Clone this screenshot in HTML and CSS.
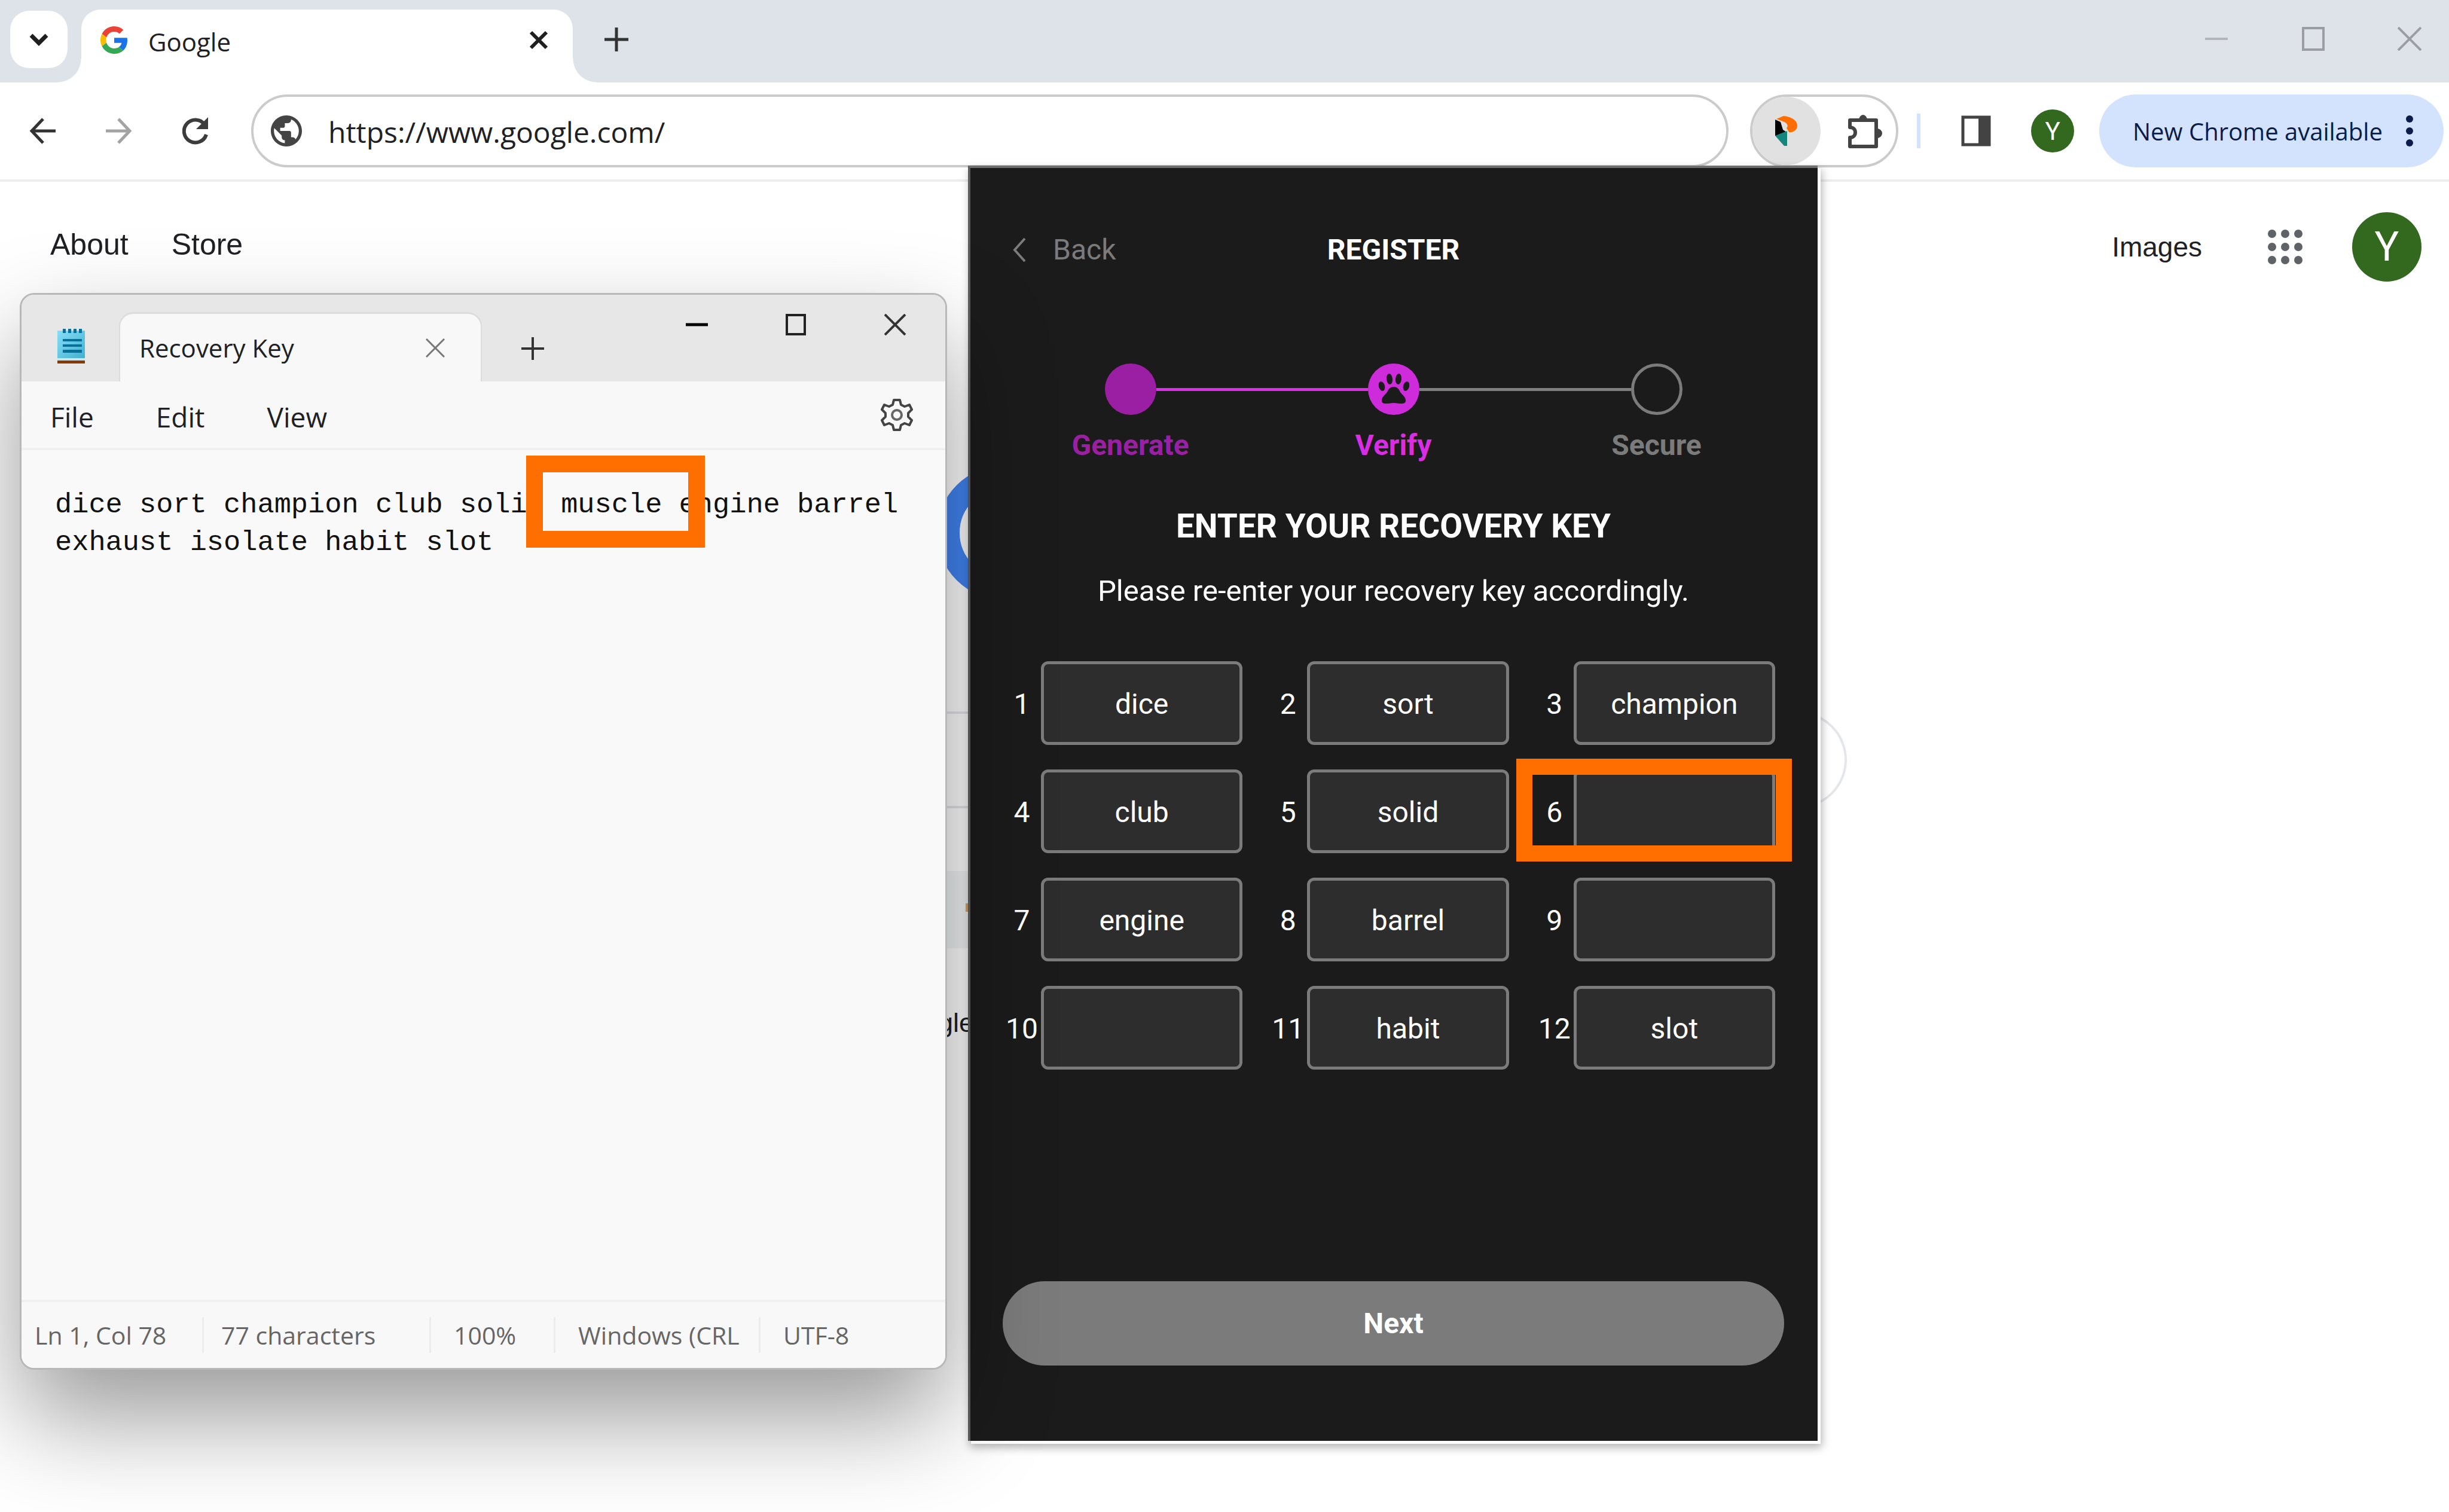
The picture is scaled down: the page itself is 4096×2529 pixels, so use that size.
FILE: index.html
```html
<!DOCTYPE html>
<html lang="en">
<head>
<meta charset="utf-8">
<title>Google</title>
<link rel="stylesheet" href="styles.css">
</head>
<body>
<header class="tabstrip">
  <button class="tab-search" aria-label="Search tabs"><svg width="38" height="24" viewBox="0 0 38 24"><path d="M6 5l13 13L32 5" fill="none" stroke="#1f1f1f" stroke-width="7"/></svg></button>
  <div class="tab">
    <svg width="46" height="48" viewBox="0 0 48 48"><path fill="#ea4335" d="M24 9.500c3.540 0 6.710 1.220 9.210 3.600l6.850-6.850C35.900 2.380 30.470 0 24 0 14.620 0 6.510 5.380 2.560 13.220l7.980 6.190C12.430 13.720 17.740 9.500 24 9.500z"/><path fill="#1a73e8" d="M46.980 24.550c0-1.570-.15-3.090-.38-4.550H24v9.020h12.940c-.58 2.960-2.260 5.480-4.780 7.180l7.730 6c4.510-4.180 7.090-10.360 7.090-17.650z"/><path fill="#fbbc05" d="M10.530 28.590c-.48-1.450-.76-2.990-.76-4.590s.27-3.140.76-4.590l-7.980-6.190C.920 16.460 0 20.120 0 24c0 3.880.92 7.540 2.560 10.780l7.970-6.190z"/><path fill="#34a853" d="M24 48c6.480 0 11.930-2.130 15.890-5.810l-7.730-6c-2.150 1.450-4.920 2.300-8.160 2.300-6.260 0-11.570-4.220-13.470-9.910l-7.980 6.190C6.510 42.620 14.620 48 24 48z"/></svg>
    <span class="tab-title">Google</span>
    <button class="plain" aria-label="Close tab"><svg width="32" height="32" viewBox="0 0 32 32"><path d="M3 3l26 26M29 3L3 29" stroke="#1f1f1f" stroke-width="6"/></svg></button>
  </div>
  <button class="plain new-tab" aria-label="New tab"><svg width="40" height="40" viewBox="0 0 40 40"><path d="M20 0v40M0 20h40" stroke="#333" stroke-width="5"/></svg></button>
  <div class="win-buttons">
    <button class="plain" aria-label="Minimize"><svg width="40" height="40" viewBox="0 0 40 40"><path d="M0 20h38" stroke="#b2b6ba" stroke-width="4"/></svg></button>
    <button class="plain" aria-label="Maximize"><svg width="40" height="40" viewBox="0 0 40 40"><rect x="3" y="2" width="34" height="36" fill="none" stroke="#9a9ea2" stroke-width="4"/></svg></button>
    <button class="plain" aria-label="Close"><svg width="40" height="40" viewBox="0 0 40 40"><path d="M1 1l38 38M39 1L1 39" stroke="#9a9ea2" stroke-width="4"/></svg></button>
  </div>
</header>

<div class="toolbar">
  <div class="nav-buttons">
    <button class="plain" aria-label="Back"><svg width="44" height="44" viewBox="0 0 44 44"><path d="M23 2L4 22l19 20M4 22h40" fill="none" stroke="#333" stroke-width="5"/></svg></button>
    <button class="plain" aria-label="Forward"><svg width="44" height="44" viewBox="0 0 44 44"><path d="M21 2l19 20-19 20M40 22H0" fill="none" stroke="#a3a3a3" stroke-width="5"/></svg></button>
    <button class="plain" aria-label="Reload"><svg width="44" height="48" viewBox="0 0 44 48"><path d="M37 13A19 19 0 1 0 40 30" fill="none" stroke="#3c3c3c" stroke-width="6"/><path d="M43 1v20H23z" fill="#3c3c3c"/></svg></button>
  </div>
  <label class="omnibox">
    <svg width="52" height="52" viewBox="2 2 20 20"><path fill="#444" d="M12 2C6.480 2 2 6.480 2 12s4.480 10 10 10 10-4.480 10-10S17.520 2 12 2zm-1 17.930c-3.950-.49-7-3.850-7-7.930 0-.62.08-1.210.21-1.790L9 15v1c0 1.100.9 2 2 2v1.930zm6.900-2.540c-.26-.81-1-1.390-1.900-1.390h-1v-3c0-.55-.45-1-1-1H8v-2h2c.55 0 1-.45 1-1V7h2c1.100 0 2-.9 2-2v-.41c2.930 1.190 5 4.060 5 7.410 0 2.080-.8 3.970-2.100 5.390z"/></svg>
    <input class="url" type="text" value="https://www.google.com/" aria-label="Address">
  </label>
  <div class="extensions">
    <button class="ext-active" aria-label="Wallet extension"><svg width="38" height="50" viewBox="0 0 38 50"><path d="M2 5L14 0c12 1 23 7 23 16 0 7-6 12-14 11l-4-7c4-3 1-9-6-11z" fill="#ff6f00"/><path d="M0 6l9 4 4 13 6 4-6 6H0z" fill="#000"/><path d="M0 33l20-8v25h-5z" fill="#16857c"/></svg></button>
    <button class="plain" aria-label="Extensions"><svg width="60" height="60" viewBox="0 0 60 60"><path d="M3 12h44v44H3V41c12 0 12-17 0-17z" fill="none" stroke="#434343" stroke-width="6" stroke-linejoin="round"/><path d="M18 12a7 9 0 0 1 14 0zM48 26a9 8 0 0 1 0 16z" fill="#434343"/></svg></button>
  </div>
  <span class="divider"></span>
  <button class="plain side-panel" aria-label="Side panel"><svg width="50" height="52" viewBox="0 0 50 52"><rect x="3" y="3" width="44" height="46" fill="none" stroke="#434343" stroke-width="5"/><path d="M29 3h18v46H29z" fill="#434343"/></svg></button>
  <button class="avatar avatar-small" aria-label="Profile">Y</button>
  <button class="update">New Chrome available <svg width="12" height="52" viewBox="0 0 12 52"><g fill="#0a1d4a"><circle cx="6" cy="6" r="6"/><circle cx="6" cy="26" r="6"/><circle cx="6" cy="46" r="6"/></g></svg></button>
</div>

<main class="page">
  <nav class="page-nav">
    <div class="site-links">
      <a href="#about">About</a>
      <a href="#store">Store</a>
    </div>
    <a class="images" href="#images">Images</a>
    <button class="plain apps" aria-label="Google apps"><svg width="58" height="58" viewBox="0 0 58 58"><g fill="#5f6368"><circle cx="7" cy="7" r="7"/><circle cx="29" cy="7" r="7"/><circle cx="51" cy="7" r="7"/><circle cx="7" cy="29" r="7"/><circle cx="29" cy="29" r="7"/><circle cx="51" cy="29" r="7"/><circle cx="7" cy="51" r="7"/><circle cx="29" cy="51" r="7"/><circle cx="51" cy="51" r="7"/></g></svg></button>
    <button class="avatar avatar-large" aria-label="Account">Y</button>
  </nav>
  <svg class="logo" viewBox="0 0 962 224"><circle cx="112" cy="112" r="93" fill="none" stroke="#4285f4" stroke-width="38"/></svg>
  <div class="search-box"></div>
  <div class="search-buttons"><span class="button-mark"></span></div>
  <p class="offer">gle</p>
</main>

<section class="popup" aria-label="Register">
  <div class="popup-head">
    <button class="back"><svg width="24" height="42" viewBox="0 0 24 42"><path d="M21 2L4 21l17 19" fill="none" stroke="#7b7b7b" stroke-width="4"/></svg>Back</button>
    <h1>REGISTER</h1>
  </div>
  <ol class="steps">
    <li class="done"><div class="rail"><span class="line none"></span><span class="dot"></span><span class="line on"></span></div>Generate</li>
    <li class="current"><div class="rail"><span class="line on"></span><span class="dot"><svg width="86" height="86" viewBox="0 0 86 86"><g fill="#1b1b1b"><ellipse cx="36" cy="26" rx="5" ry="9" transform="rotate(-6 36 26)"/><ellipse cx="51" cy="26" rx="5" ry="9" transform="rotate(6 51 26)"/><ellipse cx="23" cy="38" rx="5" ry="8" transform="rotate(-16 23 38)"/><ellipse cx="64" cy="38" rx="5" ry="8" transform="rotate(16 64 38)"/><path d="M43 39c6 0 9 4 11 9 4 5 9 8 9 14 0 7-8 5-20 4-12 1-20 3-20-4 0-6 5-9 9-14 2-5 5-9 11-9z"/></g></svg></span><span class="line"></span></div>Verify</li>
    <li><div class="rail"><span class="line"></span><span class="dot"></span><span class="line none"></span></div>Secure</li>
  </ol>
  <h2>ENTER YOUR RECOVERY KEY</h2>
  <p class="hint">Please re-enter your recovery key accordingly.</p>
  <div class="words">
    <div class="word"><label for="w1">1</label><input id="w1" value="dice"></div>
    <div class="word"><label for="w2">2</label><input id="w2" value="sort"></div>
    <div class="word"><label for="w3">3</label><input id="w3" value="champion"></div>
    <div class="word"><label for="w4">4</label><input id="w4" value="club"></div>
    <div class="word"><label for="w5">5</label><input id="w5" value="solid"></div>
    <div class="word marked"><label for="w6">6</label><input id="w6"></div>
    <div class="word"><label for="w7">7</label><input id="w7" value="engine"></div>
    <div class="word"><label for="w8">8</label><input id="w8" value="barrel"></div>
    <div class="word"><label for="w9">9</label><input id="w9"></div>
    <div class="word"><label for="w10">10</label><input id="w10"></div>
    <div class="word"><label for="w11">11</label><input id="w11" value="habit"></div>
    <div class="word"><label for="w12">12</label><input id="w12" value="slot"></div>
  </div>
  <button class="next">Next</button>
</section>

<section class="notepad" aria-label="Notepad">
  <div class="np-title">
    <svg class="np-icon" width="46" height="64" viewBox="0 0 46 64"><defs><linearGradient id="pad" x1="0" y1="0" x2="1" y2="1"><stop offset="0" stop-color="#86dff8"/><stop offset="1" stop-color="#43b0d0"/></linearGradient></defs><path d="M0 5h46v46H0z" fill="url(#pad)"/><path d="M0 51h46v4H0z" fill="#cfe3ea"/><path d="M0 55h46v5H0z" fill="#8a3a00"/><path d="M9 19h32v4H9zM9 28h32v4H9zM9 37h32v5H9zM9 2h5v7H9zM18 2h5v7h-5zM27 2h5v7h-5zM36 2h5v7h-5z" fill="#05709a"/></svg>
    <div class="np-tab">Recovery Key
      <button class="plain" aria-label="Close tab"><svg width="32" height="32" viewBox="0 0 32 32"><path d="M1 1l30 30M31 1L1 31" stroke="#777" stroke-width="3"/></svg></button>
    </div>
    <button class="plain np-new" aria-label="New tab"><svg width="38" height="38" viewBox="0 0 38 38"><path d="M19 0v38M0 19h38" stroke="#333" stroke-width="4"/></svg></button>
    <div class="np-win">
      <button class="plain" aria-label="Minimize"><svg width="37" height="36" viewBox="0 0 37 36"><path d="M0 18h37" stroke="#000" stroke-width="5"/></svg></button>
      <button class="plain" aria-label="Maximize"><svg width="37" height="36" viewBox="0 0 37 36"><rect x="3" y="2" width="30" height="32" fill="none" stroke="#222" stroke-width="4"/></svg></button>
      <button class="plain" aria-label="Close"><svg width="37" height="36" viewBox="0 0 37 36"><path d="M1 1l34 34M35 1L1 35" stroke="#333" stroke-width="4"/></svg></button>
    </div>
  </div>
  <div class="np-menu">
    <button class="plain">File</button>
    <button class="plain">Edit</button>
    <button class="plain">View</button>
    <button class="plain np-gear" aria-label="Settings"><svg width="54" height="56" viewBox="0 0 54 56"><path d="M22 3h10l2 8 6 3 8-3 4 8-6 6v6l6 6-4 8-8-3-6 3-2 8H22l-2-8-6-3-8 3-4-8 6-6v-6l-6-6 4-8 8 3 6-3z" fill="none" stroke="#444" stroke-width="4" stroke-linejoin="round"/><circle cx="27" cy="28" r="8" fill="none" stroke="#666" stroke-width="4"/></svg></button>
  </div>
  <textarea class="np-text" aria-label="Document" spellcheck="false">dice sort champion club solid muscle engine barrel
exhaust isolate habit slot</textarea>
  <div class="np-status">
    <span>Ln 1, Col 78</span><span>77 characters</span><span>100%</span><span>Windows (CRL</span><span>UTF-8</span>
  </div>
  <div class="np-mark"></div>
</section>
</body>
</html>
```
FILE: styles.css
```css
* { box-sizing: border-box; }
body {
  margin: 0;
  min-height: 100vh;
  display: flex;
  flex-direction: column;
  position: relative;
  overflow: hidden;
  background: #fff;
  color: #202124;
  font-family: "Open Sans", "Noto Sans", sans-serif;
}
button, input, textarea { font: inherit; color: inherit; margin: 0; padding: 0; border: 0; background: none; outline: 0; }
button { display: flex; align-items: center; justify-content: center; }
svg { display: block; flex: none; }

/* Tab strip */
.tabstrip { display: flex; align-items: flex-start; height: 138px; background: #dee2e9; }
.tab-search { width: 96px; height: 96px; margin: 18px 23px 0 17px; border-radius: 32px; background: #fff; }
.tab {
  position: relative;
  display: flex;
  align-items: center;
  width: 822px;
  height: 122px;
  margin-top: 16px;
  padding: 0 41px 20px 32px;
  border-radius: 32px 32px 0 0;
  background: #fff;
}
.tab::before, .tab::after { content: ""; position: absolute; bottom: 0; width: 40px; height: 40px; }
.tab::before { right: 100%; background: radial-gradient(circle at 0 0, transparent 39px, #fff 40px); }
.tab::after { left: 100%; background: radial-gradient(circle at 100% 0, transparent 39px, #fff 40px); }
.tab-title { flex: 1; margin-left: 34px; padding-top: 6px; font-size: 42px; line-height: 56px; }
.new-tab { margin: 46px 0 0 53px; }
.win-buttons { display: flex; gap: 121px; margin: 45px 46px 0 auto; }

/* Toolbar */
.toolbar { display: flex; align-items: center; height: 166px; padding: 0 9px 0 49px; border-bottom: 4px solid #eceeec; }
.nav-buttons { display: flex; align-items: center; gap: 84px; }
.omnibox {
  display: flex;
  align-items: center;
  flex: 1;
  height: 122px;
  margin-left: 71px;
  padding-left: 29px;
  border: 4px solid #cbcbcb;
  border-radius: 61px;
}
.url { flex: 1; margin-left: 44px; padding-top: 4px; font-size: 48px; line-height: 64px; }
.extensions { display: flex; align-items: center; width: 248px; height: 122px; margin-left: 36px; border: 4px solid #cbcbcb; border-radius: 61px; }
.ext-active { width: 114px; height: 114px; margin-right: 46px; border-radius: 57px; background: #e1e1e1; }
.divider { width: 6px; height: 58px; margin-left: 31px; background: #d3e3fd; }
.side-panel { margin-left: 68px; }
.avatar { border-radius: 50%; background: #33691e; color: #fff; font-family: Roboto, sans-serif; }
.avatar-small { width: 72px; height: 72px; margin-left: 67px; font-size: 42px; }
.avatar-large { width: 116px; height: 116px; font-size: 68px; }
.update {
  justify-content: space-between;
  width: 576px;
  height: 122px;
  margin-left: 42px;
  padding: 0 51px 0 56px;
  border-radius: 61px;
  background: #d3e3fd;
  color: #0a1d4a;
  font-size: 40px;
}

/* Page */
.page { display: flex; flex: 1; flex-direction: column; align-items: center; font-family: "Liberation Sans", Arial, sans-serif; }
.page-nav { display: flex; align-items: center; align-self: stretch; padding: 51px 46px 0 84px; }
.site-links { display: flex; gap: 72px; padding-bottom: 8px; }
.page-nav a { color: #202124; text-decoration: none; font-size: 50px; line-height: 56px; }
.page-nav .images { margin-left: auto; font-size: 46px; }
.apps { margin: 0 83px 0 110px; }
.logo { width: 962px; height: 224px; margin-top: 308px; }
.search-box { width: 2082px; height: 162px; margin-top: 187px; border: 4px solid #e4e6ea; border-radius: 81px; }
.search-buttons { width: 1016px; height: 129px; margin-top: 105px; padding: 54px 0 0 75px; background: #f2f5f7; }
.button-mark { display: block; width: 6px; height: 14px; background: #e0a868; }
.offer { width: 958px; margin: 100px 0 0; font-size: 45px; line-height: 50px; }

/* Extension popup */
.popup {
  position: absolute;
  top: 277px;
  right: 1056px;
  display: flex;
  flex-direction: column;
  width: 1421px;
  height: 2133px;
  padding: 107px 56px 126px 54px;
  border-top: 4px solid #6f6f6f;
  border-left: 4px solid #5c5c5c;
  background: #1b1b1b;
  color: #fff;
  box-shadow: 5px 5px 0 #fff, 5px 9px 14px 2px rgba(0, 0, 0, .3);
  font-family: Roboto, sans-serif;
  font-size: 48px;
  line-height: 60px;
}
.popup-head { display: grid; grid-template-columns: 1fr auto 1fr; align-items: center; }
.back { justify-self: start; gap: 44px; padding-left: 16px; color: #7b7b7b; }
h1, h2 { margin: 0; font-size: 48px; font-weight: 700; line-height: 60px; }
.steps { display: grid; grid-template-columns: repeat(3, 440px); justify-content: center; margin: 160px 0 0; padding: 0; list-style: none; color: #7b7b7b; font-weight: 700; text-align: center; }
.rail { display: flex; align-items: center; margin-bottom: 21px; }
.line { flex: 1; height: 5px; background: #7f7f7f; }
.line.on { background: #dd2fe8; }
.line.none { background: none; }
.dot { width: 86px; height: 86px; border: 5px solid #7b7b7b; border-radius: 50%; }
.done { color: #9a1fa2; }
.done .dot { border: 0; background: #9a1fa2; }
.current { color: #d92de3; }
.current .dot { border: 0; background: #ce2cdb; }
h2 { margin-top: 69px; font-size: 55px; line-height: 72px; text-align: center; }
.hint { margin: 43px 0 0; font-size: 49px; text-align: center; }
.words { display: grid; grid-template-columns: repeat(3, minmax(0, 1fr)); gap: 41px 44px; margin: 87px 15px 0 0; }
.word { position: relative; display: flex; align-items: center; }
.word label { width: 64px; padding-top: 3px; text-align: center; }
.word input { flex: 1; min-width: 0; height: 140px; padding-top: 3px; border: 5px solid #7b7b7b; border-radius: 12px; background: #2d2d2d; text-align: center; }
.marked::after { content: ""; position: absolute; inset: -18px -28px -14px -32px; border: 27px solid #ff6f00; }
.next { height: 141px; margin-top: auto; border-radius: 71px; background: #7b7b7b; font-weight: 700; }

/* Notepad window */
.notepad {
  position: absolute;
  top: 490px;
  left: 33px;
  display: flex;
  flex-direction: column;
  width: 1551px;
  height: 1801px;
  border: 3px solid #b8b8b8;
  border-radius: 24px;
  background: #f9f9f9;
  box-shadow: 0 80px 170px rgba(0, 0, 0, .4);
}
.np-title { display: flex; align-items: flex-end; height: 145px; padding: 0 65px 0 60px; border-radius: 21px 21px 0 0; background: #e7e7e7; }
.np-icon { margin-bottom: 26px; }
.np-tab {
  display: flex;
  align-items: center;
  justify-content: space-between;
  width: 607px;
  height: 116px;
  margin-left: 57px;
  padding: 0 60px 0 32px;
  border: solid #dcdcdc;
  border-width: 3px 2px 0;
  border-radius: 24px 24px 0 0;
  background: #f8f8f8;
  font-size: 42px;
}
.np-new { margin: 0 0 36px 66px; }
.np-win { display: flex; align-self: flex-start; gap: 129px; margin: 32px 0 0 auto; }
.np-menu { display: flex; align-items: center; gap: 104px; height: 115px; padding: 0 54px 0 48px; border-bottom: 4px solid #f0f0f0; background: #f8f8f8; font-size: 46px; line-height: 56px; }
.np-menu button { padding-top: 6px; }
.np-menu .np-gear { margin-left: auto; padding: 0; }
.np-text { flex: 1; padding: 60px 0 0 56px; resize: none; color: #111; font-family: "Liberation Mono", monospace; font-size: 47px; line-height: 63px; }
.np-status { display: grid; grid-template-columns: 302px 380px 208px 343px 1fr; align-items: center; height: 114px; border-top: 4px solid #f0f0f0; border-radius: 0 0 21px 21px; background: #f8f8f8; color: #666; font-size: 41px; }
.np-status span { padding-left: 38px; border-left: 3px solid #ececec; line-height: 60px; white-space: nowrap; }
.np-status span:first-child { padding-left: 22px; border: 0; }
.np-status span:nth-child(2) { padding-left: 29px; }
.np-mark { position: absolute; top: 269px; left: 844px; width: 299px; height: 154px; border: 28px solid #ff6f00; }
```
